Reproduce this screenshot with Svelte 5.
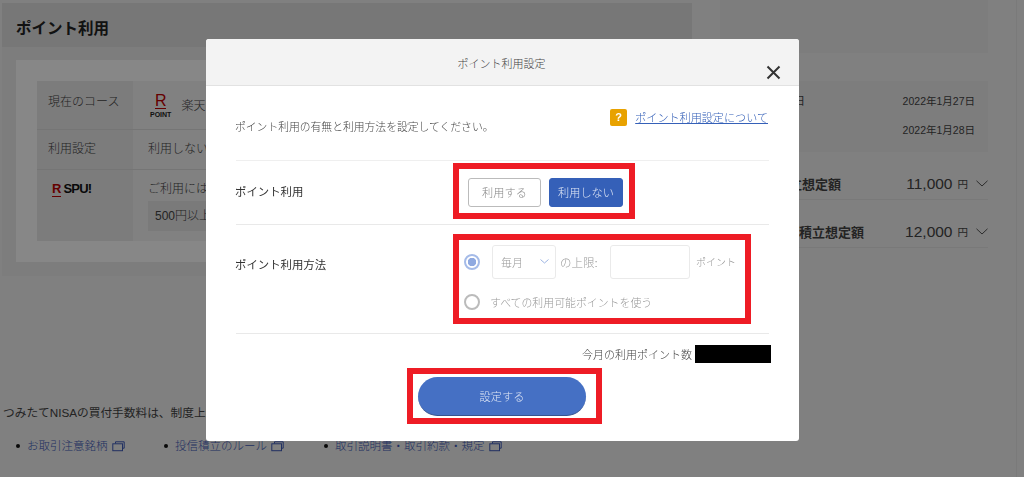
<script>
	let usePoint = $state(false);
	let mode = $state('limit');

	const links = [
		{ label: 'お取引注意銘柄', width: 148 },
		{ label: '投信積立のルール', width: 160 },
		{ label: '取引説明書・取引約款・規定', width: 200 }
	];
</script>

{#snippet extIcon()}
	<svg class="ext" width="13" height="11" viewBox="0 0 13 11" fill="none" stroke="currentColor" stroke-width="1">
		<path d="M3.500 2.500V.8h8.700v6.400h-1.700" />
		<rect x="0.8" y="2.800" width="9.700" height="6.900" />
	</svg>
{/snippet}

{#snippet chevron()}
	<svg class="chev" width="12" height="7" viewBox="0 0 12 7" fill="none" stroke="currentColor" stroke-width="1">
		<path d="M.5.8 6 6l5.500-5.200" />
	</svg>
{/snippet}

<div class="page">
	<div class="columns">
		<section class="left">
			<div class="panel">
				<h2>ポイント利用</h2>
				<div class="panel-body">
					<div class="card">
						<table>
							<tbody>
								<tr>
									<th>現在のコース</th>
									<td>
										<div class="course">
											<span class="rpoint"><b>R</b><small>POINT</small></span>
											<span>楽天ポイント</span>
										</div>
									</td>
								</tr>
								<tr>
									<th>利用設定</th>
									<td>利用しない</td>
								</tr>
								<tr>
									<th><span class="spu"><b>R</b>SPU!</span></th>
									<td>
										ご利用には楽
										<div class="note">500円以上</div>
									</td>
								</tr>
							</tbody>
						</table>
					</div>
				</div>
			</div>
			<p class="fee">つみたてNISAの買付手数料は、制度上無料です。</p>
			<ul class="links">
				{#each links as link}
					<li style="width: {link.width}px"><a href="#top">{link.label}</a>{@render extIcon()}</li>
				{/each}
			</ul>
		</section>

		<aside class="right">
			<div class="top-card"></div>
			<dl class="dates">
				<div><dt>注文受付日</dt><dd>2022年1月27日</dd></div>
				<div><dt>受渡日</dt><dd>2022年1月28日</dd></div>
			</dl>
			<div class="amount first">
				<span class="amount-label">今月の積立想定額</span>
				<span class="num">11,000</span><span class="yen">円</span>{@render chevron()}
			</div>
			<div class="amount second">
				<span class="amount-label">来月以降の積立想定額</span>
				<span class="num">12,000</span><span class="yen">円</span>{@render chevron()}
			</div>
		</aside>
	</div>
</div>

<div class="overlay"></div>

<div class="modal">
	<header>
		<span>ポイント利用設定</span>
		<button class="close" aria-label="閉じる">
			<svg width="15" height="15" viewBox="0 0 15 15" stroke="#333" stroke-width="2" fill="none">
				<path d="M1.500 1.500l12 12M13.500 1.500l-12 12" />
			</svg>
		</button>
	</header>

	<div class="body">
		<div class="intro">
			<p>ポイント利用の有無と利用方法を設定してください。</p>
			<div class="help">
				<span class="q">?</span>
				<a href="#top">ポイント利用設定について</a>
			</div>
		</div>

		<div class="row use">
			<div class="label">ポイント利用</div>
			<div class="mark">
				<button class="choice" class:on={usePoint} onclick={() => (usePoint = true)}>利用する</button>
				<button class="choice" class:on={!usePoint} onclick={() => (usePoint = false)}>利用しない</button>
			</div>
		</div>

		<div class="row how">
			<div class="label">ポイント利用方法</div>
			<div class="mark method">
				<div class="line-a">
					<button class="radio" class:checked={mode === 'limit'} aria-label="上限" onclick={() => (mode = 'limit')}></button>
					<div class="select">
						<span>毎月</span>
						<svg width="9" height="5" viewBox="0 0 9 5" fill="none" stroke="#9db4e2" stroke-width="1">
							<path d="M.5.5 4.500 4l4-3.500" />
						</svg>
					</div>
					<span class="limit">の上限:</span>
					<div class="field"></div>
					<span class="unit">ポイント</span>
				</div>
				<div class="line-b">
					<button class="radio" class:checked={mode === 'all'} aria-label="すべて" onclick={() => (mode = 'all')}></button>
					<span>すべての利用可能ポイントを使う</span>
				</div>
			</div>
		</div>

		<div class="used">今月の利用ポイント数<span class="redact"></span></div>

		<div class="mark submit-mark">
			<button class="submit">設定する</button>
		</div>
	</div>
</div>

<style>
	:global(body) {
		margin: 0;
		overflow: hidden;
		background: #f1f1f1;
		font-family: "Liberation Sans", "Noto Sans CJK JP", sans-serif;
		font-weight: 300;
	}

	.page {
		height: 477px;
		overflow: hidden;
		color: #333;
	}

	.columns {
		display: flex;
		gap: 28px;
		width: 1017px;
		height: 477px;
		padding-left: 2px;
		box-sizing: border-box;
		border-right: 1px solid #e6e6e6;
	}

	.left {
		width: 690px;
		flex: none;
		padding-top: 3px;
	}

	.panel {
		background: #ececec;
		height: 273px;
	}

	h2 {
		margin: 0;
		height: 44px;
		line-height: 51px;
		padding-left: 14px;
		font-size: 15.5px;
		font-weight: 700;
		background: #e0e0e0;
		color: #222;
	}

	.panel-body {
		padding: 13px 14px;
	}

	.card {
		background: #fff;
		padding: 21px;
		height: 160px;
	}

	table {
		border-collapse: collapse;
		width: 100%;
		font-size: 12px;
		line-height: 17px;
		color: #444;
	}

	th {
		width: 96px;
		background: #eaeaea;
		font-weight: 300;
		text-align: left;
		vertical-align: top;
		padding: 13px 0 0 11px;
		box-sizing: border-box;
	}

	td {
		background: #f3f3f3;
		vertical-align: top;
		padding: 11px 0 0 15px;
	}

	tr:nth-child(1) {
		height: 48px;
	}

	tr:nth-child(2) {
		height: 40px;
	}

	tr:nth-child(3) {
		height: 72px;
	}

	tr + tr th,
	tr + tr td {
		padding-top: 11px;
		border-top: 1px solid #ddd;
	}

	tr:nth-child(3) th {
		padding-top: 10px;
	}

	.course {
		display: flex;
		align-items: center;
		gap: 10px;
		margin: 2px 0 0 2px;
	}

	.rpoint {
		display: flex;
		flex-direction: column;
		align-items: center;
		line-height: 1;
	}

	.rpoint b {
		color: #bf0000;
		font-size: 16px;
		border-bottom: 1.5px solid #bf0000;
		line-height: 14px;
	}

	.rpoint small {
		font-size: 7px;
		font-weight: 700;
		color: #222;
		margin-top: 2px;
	}

	.spu {
		font-weight: 700;
		font-size: 13px;
		letter-spacing: -0.8px;
		color: #111;
		margin-left: 4px;
	}

	.spu b {
		color: #bf0000;
		font-size: 13px;
		letter-spacing: 0;
		margin-right: 2px;
		border-bottom: 1px solid #bf0000;
	}

	.note {
		background: #e6e6e6;
		margin-top: 3px;
		padding: 6px 7px;
		height: 18px;
		line-height: 18px;
	}

	.fee {
		margin: 129px 0 0 1px;
		font-size: 11.700px;
		line-height: 16px;
		color: #444;
		font-weight: 400;
		white-space: nowrap;
	}

	.links {
		list-style: none;
		display: flex;
		margin: 17px 0 0 14px;
		padding: 0;
		font-size: 11.500px;
		line-height: 16px;
	}

	.links li {
		display: flex;
		align-items: center;
		flex: none;
		white-space: nowrap;
		padding-left: 11px;
		box-sizing: border-box;
		position: relative;
		color: #3f5bb8;
	}

	.links li::before {
		content: "";
		position: absolute;
		left: 0;
		top: 6px;
		width: 4px;
		height: 4px;
		border-radius: 50%;
		background: #111;
	}

	.links a {
		color: inherit;
		text-decoration: none;
	}

	.ext {
		margin-left: 4px;
	}

	.right {
		width: 268px;
		flex: none;
	}

	.top-card {
		height: 53px;
		background: #ececec;
	}

	.dates {
		margin: 28px 0 0;
		height: 71px;
		padding: 12px 13px 0 0;
		box-sizing: border-box;
		background: #ececec;
		font-size: 10.500px;
		font-weight: 400;
		color: #444;
	}

	.dates div {
		display: flex;
		justify-content: space-between;
		height: 28.500px;
		line-height: 16px;
		padding-left: 30px;
	}

	.dates dt {
		font-weight: 400;
		font-size: 11px;
	}

	.dates dd {
		margin: 0;
	}

	.amount {
		display: flex;
		align-items: center;
		height: 48px;
		padding-top: 16px;
		border-bottom: 1px solid #e4e4e4;
		color: #444;
		box-sizing: border-box;
		font-weight: 400;
	}

	.amount-label {
		font-size: 13px;
		font-weight: 700;
		margin-right: auto;
	}

	.first .amount-label {
		padding-left: 17px;
	}

	.second .amount-label {
		padding-left: 14px;
	}

	.num {
		font-size: 15.500px;
	}

	.yen {
		font-size: 10.500px;
		margin-left: 5px;
	}

	.chev {
		margin-left: 8px;
		color: #555;
	}

	.overlay {
		position: fixed;
		inset: 0;
		background: rgba(0, 0, 0, 0.47);
	}

	.modal {
		position: fixed;
		left: 206px;
		top: 39px;
		width: 593px;
		height: 402px;
		background: #fff;
		border-radius: 3px;
		overflow: hidden;
		color: #444;
	}

	header {
		height: 47px;
		box-sizing: border-box;
		background: #f3f3f3;
		border-bottom: 1px solid #e2e2e2;
		display: flex;
		justify-content: center;
		padding: 16px 2px 0 0;
		font-size: 11px;
		line-height: 18px;
		position: relative;
	}

	.close {
		position: absolute;
		right: 18px;
		top: 26px;
		padding: 0;
		border: 0;
		background: none;
		display: flex;
	}

	.body {
		padding: 0 30px;
	}

	.intro {
		display: flex;
		justify-content: space-between;
		height: 75px;
		box-sizing: border-box;
		border-bottom: 1px solid #efefef;
		font-size: 10.800px;
	}

	.intro p {
		margin: 33px 0 0 -1px;
		line-height: 16px;
	}

	.help {
		display: flex;
		gap: 8px;
		align-items: center;
		height: 18px;
		margin: 22px 1px 0 0;
	}

	.help a {
		color: #3560b8;
		font-size: 11.100px;
	}

	.q {
		width: 17px;
		height: 17px;
		border-radius: 2px;
		background: #e8a200;
		color: #fff;
		font-weight: 700;
		font-size: 11px;
		line-height: 17px;
		text-align: center;
	}

	.row {
		display: flex;
		align-items: center;
		border-bottom: 1px solid #e9e9e9;
		box-sizing: border-box;
	}

	.use {
		height: 64px;
	}

	.how {
		height: 109px;
	}

	.label {
		width: 218px;
		flex: none;
		margin: -2px 0 0 -1px;
		font-size: 11.400px;
		line-height: 16px;
		font-weight: 400;
		color: #333;
	}

	.how .label {
		align-self: flex-start;
		margin-top: 32px;
	}

	.mark {
		border: 6px solid #ee1c25;
		box-sizing: border-box;
	}

	.use .mark {
		width: 182px;
		height: 56px;
		padding: 9px 0 0 9px;
		display: flex;
		gap: 8px;
		margin-top: -4px;
	}

	.choice {
		width: 73px;
		height: 29px;
		padding: 0 0 1px;
		font: inherit;
		font-size: 11.200px;
		background: #fff;
		color: #888;
		border: 1px solid #bbb;
		border-radius: 3px;
	}

	.choice.on {
		background: #3560b8;
		border-color: #3560b8;
		color: #dfe6f5;
		width: 74px;
	}

	.how .mark {
		width: 298px;
		height: 90px;
		margin-top: -1px;
		padding-top: 5px;
		font-size: 10.900px;
		color: #999;
	}

	.line-a,
	.line-b {
		display: flex;
		align-items: center;
		padding-left: 5px;
	}

	.line-b {
		margin-top: 15px;
		gap: 10px;
	}

	.radio {
		width: 16px;
		height: 16px;
		flex: none;
		padding: 0;
		box-sizing: border-box;
		border: 2px solid #bbb;
		border-radius: 50%;
		background: #fff;
	}

	.radio.checked {
		border-color: #a5bbe8;
		background: radial-gradient(circle, #8fa9e0 0 4px, #fff 4.500px);
	}

	.select {
		width: 64px;
		height: 34px;
		margin-left: 12px;
		box-sizing: border-box;
		border: 1px solid #eaeaea;
		border-radius: 3px;
		display: flex;
		align-items: center;
		justify-content: space-between;
		padding: 0 6px 0 8px;
		font-size: 11px;
		color: #999;
	}

	.limit {
		margin-left: 4px;
		width: 50px;
		font-size: 11.500px;
	}

	.field {
		width: 80px;
		height: 34px;
		box-sizing: border-box;
		border: 1px solid #eaeaea;
		border-radius: 3px;
	}

	.unit {
		margin-left: 6px;
		font-size: 10px;
	}

	.used {
		display: flex;
		justify-content: flex-end;
		align-items: center;
		height: 18px;
		margin: 11px -2px 0 0;
		font-size: 11px;
	}

	.redact {
		display: block;
		width: 76px;
		height: 18px;
		background: #000;
		margin-left: 3px;
	}

	.submit-mark {
		width: 195px;
		height: 56px;
		margin: 5px 0 0 171px;
		padding: 3px 0 0 5px;
	}

	.submit {
		display: block;
		width: 168px;
		height: 39px;
		padding: 0;
		border: 0;
		border-bottom: 1px solid #35538f;
		border-radius: 20px;
		background: #4570c4;
		color: #dfe6f5;
		font: inherit;
		font-size: 11.200px;
	}
</style>
